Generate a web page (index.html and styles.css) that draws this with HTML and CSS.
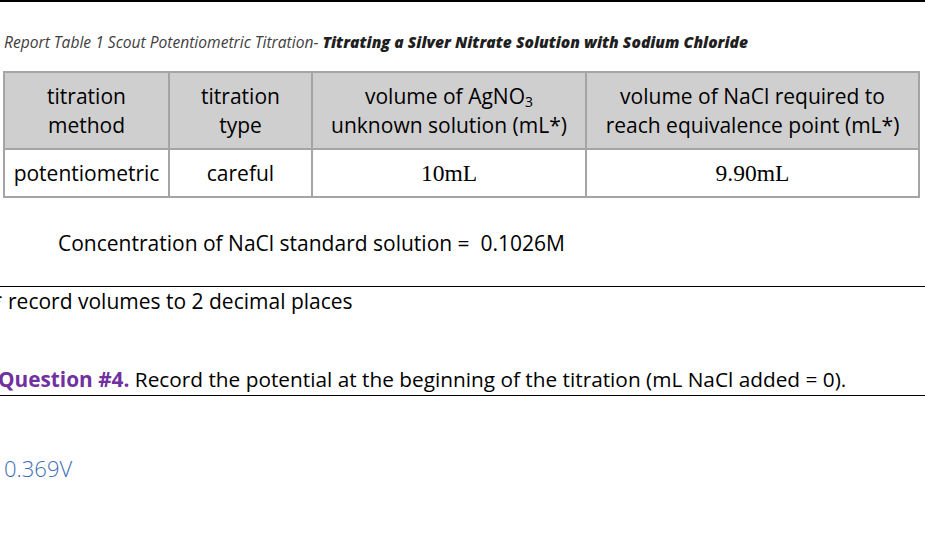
FILE: index.html
```html
<!DOCTYPE html>
<html>
<head>
<meta charset="utf-8">
<link rel="stylesheet" href="styles.css">
</head>
<body>
<div class="page">
  <div class="topline"></div>
  <p class="caption">Report Table 1 Scout Potentiometric Titration- <b>Titrating a Silver Nitrate Solution with Sodium Chloride</b></p>
  <table class="data">
    <colgroup>
      <col class="c1"><col class="c2"><col class="c3"><col class="c4">
    </colgroup>
    <thead>
      <tr>
        <th>titration<br>method</th>
        <th>titration<br>type</th>
        <th>volume of AgNO<sub>3</sub><br>unknown solution (mL*)</th>
        <th>volume of NaCl required to<br>reach equivalence point (mL*)</th>
      </tr>
    </thead>
    <tbody>
      <tr>
        <td>potentiometric</td>
        <td>careful</td>
        <td class="serif">10mL</td>
        <td class="serif">9.90mL</td>
      </tr>
    </tbody>
  </table>
  <p class="conc">Concentration of NaCl standard solution =&nbsp; 0.1026M</p>
  <div class="rule"></div>
  <p class="note"><span class="star">*</span> record volumes to 2 decimal places</p>
  <p class="question"><span class="qnum">Question #4.</span> Record the potential at the beginning of the titration (mL NaCl added = 0).</p>
  <p class="answer">0.369V</p>
</div>
</body>
</html>
```
FILE: styles.css
```css
html, body {
  margin: 0;
  padding: 0;
  background: #ffffff;
}
body {
  font-family: "Open Sans", "Lato", sans-serif;
  color: #000;
  width: 925px;
  height: 537px;
  overflow: hidden;
}
.page {
  display: flex;
  flex-direction: column;
}
.topline {
  height: 2px;
  background: #000;
}
.caption {
  margin: 31px 0 0 4px;
  font-size: 15.6px;
  line-height: 18px;
  font-style: italic;
  color: #404040;
  white-space: nowrap;
}
.caption b {
  color: #1f1f1f;
  font-weight: 800;
}
.data {
  margin: 20px 0 0 3px;
  width: 915px;
  border-collapse: collapse;
  table-layout: fixed;
  font-size: 21px;
}
.c1 { width: 165px; }
.c2 { width: 143px; }
.c3 { width: 274px; }
.c4 { width: 333px; }
.data th, .data td {
  border: 2px solid #a5a5a5;
  text-align: center;
  padding: 0;
  font-weight: normal;
}
.data th {
  background: #d0cfd0;
  height: 75px;
  line-height: 29px;
}
.data td {
  height: 46px;
  line-height: 24px;
}
.data sub {
  font-size: 14px;
  line-height: 0;
  vertical-align: -3px;
}
.data td.serif {
  font-family: "Liberation Serif", serif;
  font-size: 23.5px;
}
.conc {
  margin: 32px 0 0 58px;
  font-size: 21px;
  line-height: 26px;
}
.rule {
  margin-top: 30px;
  height: 1px;
  background: #000;
}
.note {
  margin: 1px 0 0 0;
  font-size: 21px;
  line-height: 26px;
  white-space: nowrap;
}
.star {
  margin-left: -9px;
}
.question {
  margin: 52px 0 0 -2px;
  padding-bottom: 3px;
  font-size: 20.8px;
  line-height: 26px;
  border-bottom: 1px solid #000;
  white-space: nowrap;
}
.qnum {
  color: #7030a0;
  font-weight: bold;
}
.answer {
  margin: 60px 0 0 4px;
  font-size: 22px;
  line-height: 24px;
  color: #3d6db4;
  font-weight: 300;
}
```
